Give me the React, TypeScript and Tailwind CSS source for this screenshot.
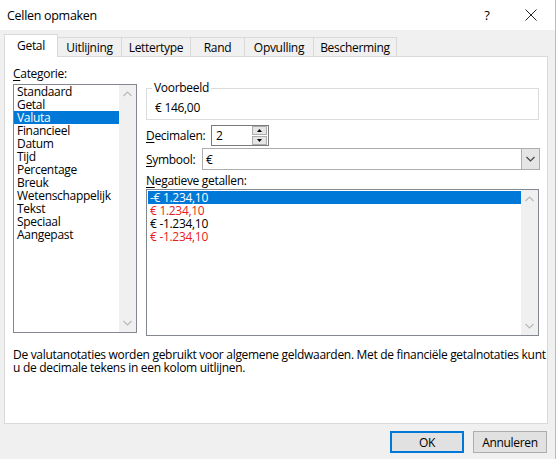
import React from "react";

const ChevUp = ({ c = "#b9b9b9" }: { c?: string }) => (
  <svg width="9" height="6" viewBox="0 0 9 6"><path d="M0.5 5 L4.5 1 L8.5 5" fill="none" stroke={c} strokeWidth="1.2" /></svg>
);
const ChevDown = ({ c = "#b9b9b9" }: { c?: string }) => (
  <svg width="9" height="6" viewBox="0 0 9 6"><path d="M0.5 1 L4.5 5 L8.5 1" fill="none" stroke={c} strokeWidth="1.2" /></svg>
);

const Tab = ({ label, w, active }: { label: string; w: string; active?: boolean }) =>
  active ? (
    <div className={`${w} h-[23px] bg-white border border-b-0 border-[#d9d9d9] flex items-center justify-center -mb-px relative z-10 pb-[2px]`}>
      {label}
    </div>
  ) : (
    <div className={`${w} h-[19px] bg-[#f0f0f0] border border-b-0 border-l-0 border-[#d9d9d9] flex items-center justify-center`}>
      {label}
    </div>
  );

export default function App() {
  const cats = ["Standaard", "Getal", "Valuta", "Financieel", "Datum", "Tijd", "Percentage", "Breuk", "Wetenschappelijk", "Tekst", "Speciaal", "Aangepast"];
  return (
    <div className="w-[556px] h-[459px] bg-[#f0f0f0] overflow-hidden flex flex-col text-[12px] leading-[13px] text-black font-['Open_Sans',sans-serif] tracking-[-0.3px] border-r border-[#9cc2e6]">
      {/* title bar */}
      <div className="h-[30px] bg-white flex items-center shrink-0">
        <div className="pl-[7px] flex-1 text-[12.5px]">Cellen opmaken</div>
        <div className="w-[20px] text-center text-[13px] mr-[28px]">?</div>
        <div className="mr-[18px]">
          <svg width="12" height="12" viewBox="0 0 12 12"><path d="M0.5 0.5 L11.5 11.5 M11.5 0.5 L0.5 11.5" stroke="#222" strokeWidth="1" /></svg>
        </div>
      </div>
      {/* tabs */}
      <div className="flex items-end pl-[4px] mt-[5px] h-[21px] shrink-0">
        <Tab label="Getal" w="w-[54px]" active />
        <Tab label="Uitlijning" w="w-[64px]" />
        <Tab label="Lettertype" w="w-[69px]" />
        <Tab label="Rand" w="w-[54px]" />
        <Tab label="Opvulling" w="w-[69px]" />
        <Tab label="Bescherming" w="w-[83px]" />
      </div>
      {/* panel */}
      <div className="mx-[4px] w-[544px] h-[368px] bg-white border border-[#d9d9d9] shrink-0 flex flex-col">
        <div className="flex pt-[9px]">
          {/* left column */}
          <div className="ml-[8px] w-[124px] flex flex-col">
            <div className="h-[18px] pt-[1px]"><span className="underline underline-offset-2">C</span>ategorie:</div>
            <div className="h-[249px] border border-[#828790] flex">
              <div className="flex-1 flex flex-col">
                {cats.map((c) => (
                  <div key={c} className={`h-[13px] pl-[3px] whitespace-nowrap ${c === "Valuta" ? "bg-[#0078d7] text-white" : ""}`}>{c}</div>
                ))}
              </div>
              <div className="w-[17px] bg-[#f0f0f0] flex flex-col justify-between items-center py-[6px]">
                <ChevUp />
                <ChevDown />
              </div>
            </div>
          </div>
          {/* right column */}
          <div className="ml-[9px] w-[394px] flex flex-col">
            <fieldset className="mt-[14px] border border-[#dcdcdc] w-[393px] px-[8px] pb-[4px]">
              <legend className="ml-[-3px] px-[2px] leading-[16px]">Voorbeeld</legend>
              <div className="pt-[5px] leading-[14px]">€ 146,00</div>
            </fieldset>
            <div className="mt-[5px] h-[21px] flex items-center">
              <div className="w-[65px]"><span className="underline underline-offset-2">D</span>ecimalen:</div>
              <div className="w-[58px] h-[21px] border border-[#7a7a7a] flex items-center">
                <div className="flex-1 pl-[4px]">2</div>
                <div className="w-[15px] h-[19px] flex flex-col mr-[1px]">
                  <div className="h-[9px] bg-[#e5e5e5] border border-[#adadad] flex items-center justify-center">
                    <svg width="5" height="3" viewBox="0 0 5 3"><path d="M0 3 L2.5 0 L5 3 Z" fill="#000" /></svg>
                  </div>
                  <div className="h-[9px] mt-px bg-[#e5e5e5] border border-[#adadad] flex items-center justify-center">
                    <svg width="5" height="3" viewBox="0 0 5 3"><path d="M0 0 L2.5 3 L5 0 Z" fill="#000" /></svg>
                  </div>
                </div>
              </div>
            </div>
            <div className="mt-[2px] h-[22px] flex items-center">
              <div className="w-[56px]"><span className="underline underline-offset-2">S</span>ymbool:</div>
              <div className="w-[338px] h-[22px] border border-[#adadad] flex items-center">
                <div className="flex-1 pl-[3px]">€</div>
                <div className="w-[18px] h-[20px] bg-[#e5e5e5] border-l border-[#adadad] flex items-center justify-center">
                  <ChevDown c="#444" />
                </div>
              </div>
            </div>
            <div className="mt-[3px] h-[16px] pt-[1px]"><span className="underline underline-offset-2">N</span>egatieve getallen:</div>
            <div className="h-[147px] w-[393px] border border-[#828790] flex">
              <div className="flex-1 flex flex-col pt-[1px] pl-[1px]">
                <div className="h-[13px] bg-[#0078d7] text-white pl-[2px]">-€ 1.234,10</div>
                <div className="h-[13px] text-[#e81c1c] pl-[2px]">€ 1.234,10</div>
                <div className="h-[13px] pl-[2px]">€ -1.234,10</div>
                <div className="h-[13px] text-[#e81c1c] pl-[2px]">€ -1.234,10</div>
              </div>
              <div className="w-[17px] bg-[#f0f0f0] flex flex-col justify-between items-center py-[6px]">
                <ChevUp />
                <ChevDown />
              </div>
            </div>
          </div>
        </div>
        <div className="mt-[12px] ml-[8px] whitespace-nowrap leading-[13px]">
          De valutanotaties worden gebruikt voor algemene geldwaarden. Met de financiële getalnotaties kunt
          <br />
          u de decimale tekens in een kolom uitlijnen.
        </div>
      </div>
      {/* buttons */}
      <div className="flex justify-end mt-[7px] pr-[8px] gap-[9px]">
        <div className="w-[74px] h-[22px] bg-[#e1e1e1] border-2 border-[#0078d7] flex items-center justify-center">OK</div>
        <div className="w-[74px] h-[22px] bg-[#e1e1e1] border border-[#adadad] flex items-center justify-center">Annuleren</div>
      </div>
    </div>
  );
}
